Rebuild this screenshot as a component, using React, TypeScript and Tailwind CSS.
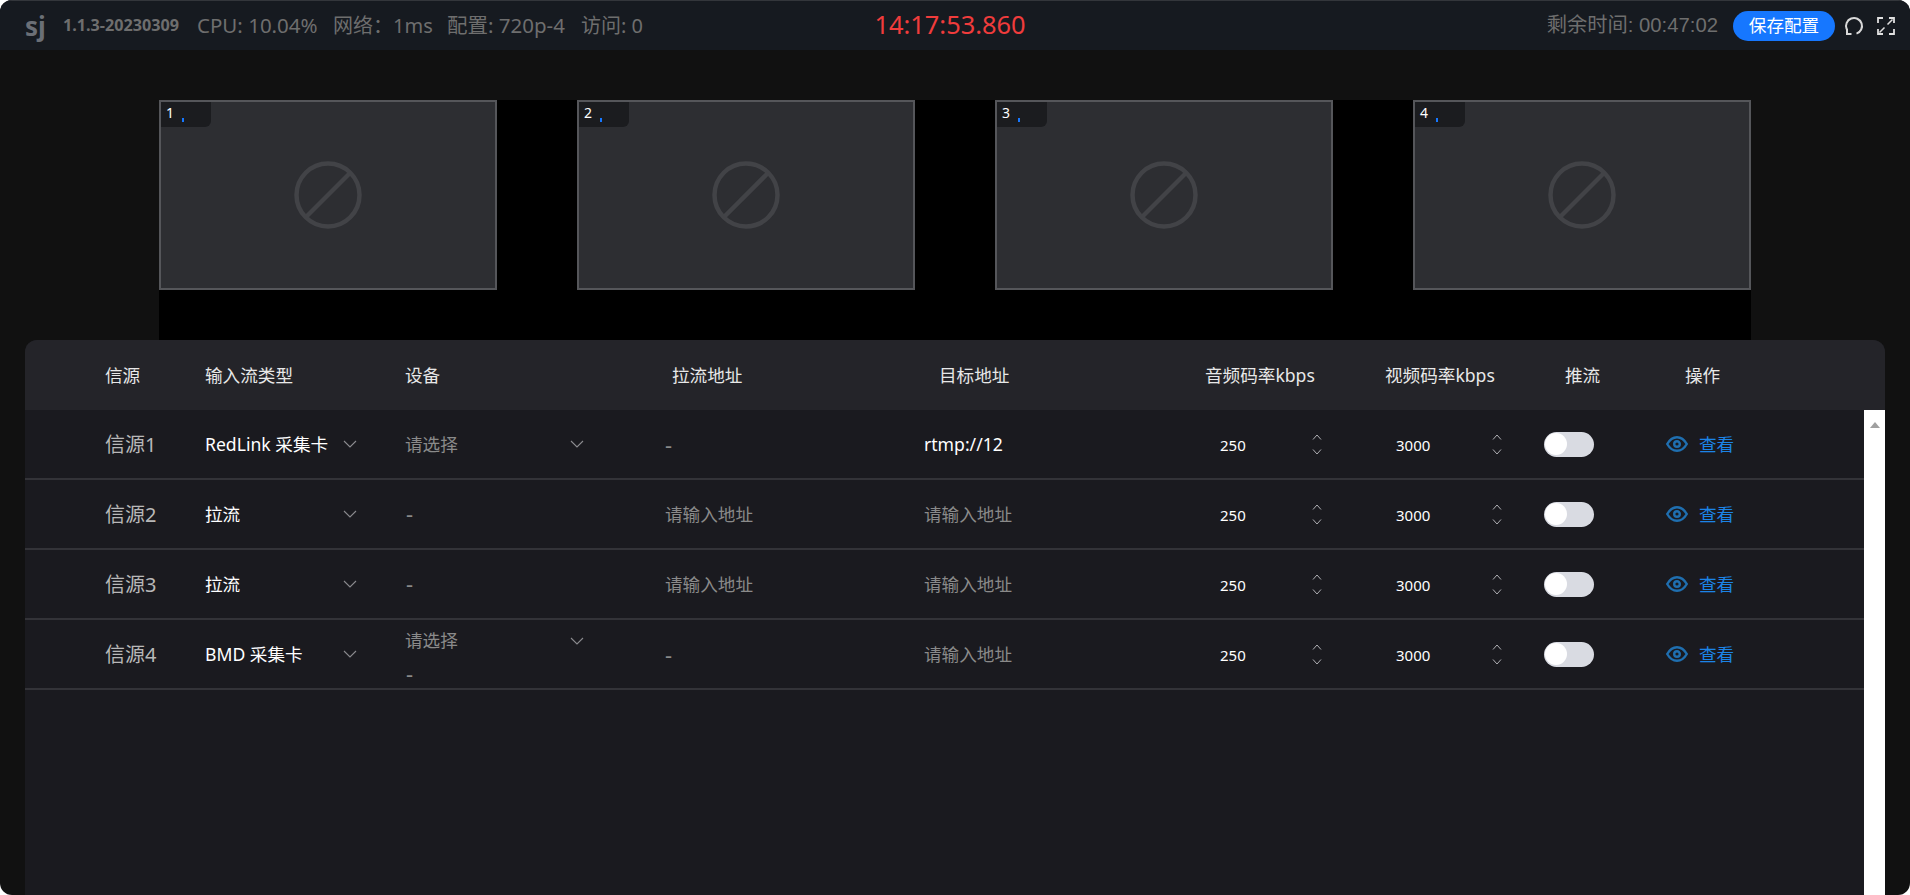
import React from "react";

const FONT = "font-['Noto_Sans','Noto_Sans_CJK_SC',sans-serif]";

interface SourceRow {
  name: string;
  type: string;
  device: "select" | "dash" | "both";
  pull: string | null;
  target: string | null;
}

const rows: SourceRow[] = [
  { name: "信源1", type: "RedLink 采集卡", device: "select", pull: null, target: "rtmp://12" },
  { name: "信源2", type: "拉流", device: "dash", pull: "", target: "" },
  { name: "信源3", type: "拉流", device: "dash", pull: "", target: "" },
  { name: "信源4", type: "BMD 采集卡", device: "both", pull: null, target: "" },
];

function Chevron({ up = false, className = "" }: { up?: boolean; className?: string }) {
  return (
    <svg width="14" height="8" viewBox="0 0 14 8" fill="none" className={className}>
      <path d={up ? "M1 7 L7 1 L13 7" : "M1 1 L7 7 L13 1"} stroke="#8a8a8e" strokeWidth="1.1" />
    </svg>
  );
}

function Spinner() {
  return (
    <div className="flex flex-col items-center gap-[9px]">
      <svg width="10" height="6" viewBox="0 0 10 6" fill="none">
        <path d="M1 5.5 L5 1 L9 5.5" stroke="#b0b0b4" strokeWidth="1" />
      </svg>
      <svg width="10" height="6" viewBox="0 0 10 6" fill="none">
        <path d="M1 .5 L5 5 L9 .5" stroke="#b0b0b4" strokeWidth="1" />
      </svg>
    </div>
  );
}

function VideoBox({ index }: { index: number }) {
  return (
    <div className="relative flex h-[190px] w-[338px] items-center justify-center border-2 border-[#55565a] bg-[#2d2e32]">
      <div className="absolute left-0 top-0 h-[25px] w-[50px] rounded-br-md bg-[#1b1c1f]">
        <span className="absolute left-[5px] top-[1px] text-[14px] leading-[20px] text-white">{index}</span>
        <span className="absolute left-[21px] top-[16px] h-[4px] w-[2px] bg-[#1677ff]" />
      </div>
      <svg width="68" height="68" viewBox="0 0 68 68" fill="none">
        <circle cx="34" cy="34" r="31.5" stroke="#424347" strokeWidth="4.5" />
        <path d="M56 12 L12 56" stroke="#424347" strokeWidth="4.5" />
      </svg>
    </div>
  );
}

function Row({ row }: { row: SourceRow }) {
  return (
    <div className="box-border grid h-[70px] grid-cols-[100px_200px_260px_259px_281px_180px_159px_122px_1fr] items-center border-b-2 border-[#333338] pl-[80px] text-[17.6px]">
      <div className="pt-[1px] text-[20px] text-[#b8b8b8]">{row.name}</div>
      <div className="flex w-[152px] items-center justify-between text-white">
        <span className="whitespace-nowrap">{row.type}</span>
        <Chevron />
      </div>
      <div className="relative h-full text-[#8a8a8a]">
        {row.device === "select" && (
          <div className="flex h-full w-[179px] items-center justify-between">
            <span>请选择</span>
            <Chevron />
          </div>
        )}
        {row.device === "dash" && <div className="flex h-full items-center pb-[1px] pl-[1px] text-[22px]">-</div>}
        {row.device === "both" && (
          <div className="flex h-full w-[179px] flex-col">
            <div className="flex h-[41px] items-center justify-between">
              <span>请选择</span>
              <Chevron />
            </div>
            <div className="pl-[1px] text-[22px] leading-[24px]">-</div>
          </div>
        )}
      </div>
      <div className="text-[#8a8a8a]">
        {row.pull === null ? <span className="text-[22px]">-</span> : "请输入地址"}
      </div>
      <div className={row.target ? "text-white" : "text-[#8a8a8a]"}>{row.target || "请输入地址"}</div>
      <div className="flex items-center">
        <span className="w-[107px] pl-[15px] pt-[2px] text-[15px] text-white">250</span>
        <Spinner />
      </div>
      <div className="flex items-center">
        <span className="w-[107px] pl-[11px] pt-[2px] text-[15px] text-white">3000</span>
        <Spinner />
      </div>
      <div className="flex h-[25px] w-[50px] items-center rounded-full bg-[#d9dbe2] pl-[1px]">
        <span className="h-[22px] w-[22px] rounded-full bg-white" />
      </div>
      <div className="flex items-center gap-[11px]">
        <svg width="22" height="16" viewBox="0 0 22 16" fill="none" stroke="#1f6fb0" strokeWidth="2.4">
          <path d="M1.2 8 C4 3.2 7.2 1.2 11 1.2 C14.8 1.2 18 3.2 20.8 8 C18 12.8 14.8 14.8 11 14.8 C7.2 14.8 4 12.8 1.2 8 Z" />
          <circle cx="11" cy="8" r="2.8" />
        </svg>
        <span className="text-[#1c84e6]">查看</span>
      </div>
    </div>
  );
}

export default function App() {
  return (
    <div className={`h-screen w-full overflow-hidden bg-white ${FONT}`}>
      <div className="flex h-full flex-col overflow-hidden rounded-[12px] bg-[#111111]">
        {/* Top bar */}
        <header className="flex h-[50px] shrink-0 items-center border-t border-[#33363b] bg-[#161a20] text-[20.5px] text-[#6e6e6e]">
          <div className="flex flex-1 items-center whitespace-nowrap pl-[25px]">
            <span className="w-[38px] text-[26px] font-bold leading-none text-[#6b6f76]">sj</span>
            <span className="w-[134px] text-[16.2px] font-bold">1.1.3-20230309</span>
            <span className="w-[136px]">CPU: 10.04%</span>
            <span className="w-[114px] text-[20px]">网络：1ms</span>
            <span className="w-[134px]">配置: 720p-4</span>
            <span className="text-[20px]">访问: 0</span>
          </div>
          <div className="mb-[1px] mr-[20px] text-[25.4px] leading-none text-[#f03c3c]">14:17:53.860</div>
          <div className="flex flex-1 items-center justify-end whitespace-nowrap pr-[15px]">
            <span className="font-['Liberation_Sans','Noto_Sans_CJK_SC',sans-serif] text-[20.3px]">剩余时间: 00:47:02</span>
            <button className="ml-[15px] h-[30px] w-[102px] rounded-full bg-[#1677ff] text-[17.6px] text-white">保存配置</button>
            <svg width="20" height="20" viewBox="0 0 20 20" fill="none" className="ml-[9px]">
              <path d="M2.6 13 A8 8 0 1 1 12.5 17.6" stroke="#d8d8d8" strokeWidth="2" />
              <path d="M3 12.5 V18 H7.5" stroke="#d8d8d8" strokeWidth="2" />
            </svg>
            <svg width="18" height="18" viewBox="0 0 18 18" fill="none" stroke="#e0e0e0" strokeWidth="1.8" className="ml-[13px]">
              <path d="M1 6 V1 H6 M12 1 H17 V6 M17 12 V17 H12 M6 17 H1 V12" />
              <path d="M10.5 7.5 L15.5 2.5 M7.5 10.5 L2.5 15.5" strokeWidth="1.5" />
            </svg>
          </div>
        </header>

        {/* Video previews */}
        <div className="mx-auto mt-[50px] flex h-[240px] w-[1592px] shrink-0 items-start gap-[80px] bg-black">
          {[1, 2, 3, 4].map((n) => (
            <VideoBox key={n} index={n} />
          ))}
        </div>

        {/* Source table */}
        <div className="mx-[25px] flex min-h-0 flex-1 flex-col overflow-hidden rounded-t-[12px] bg-[#1a1a1f]">
          <div className="grid h-[70px] shrink-0 grid-cols-[100px_200px_260px_259px_281px_180px_159px_122px_1fr] items-center whitespace-nowrap bg-[#242429] pl-[80px] text-[17.6px] text-[#e8e8e8]">
            <div>信源</div>
            <div>输入流类型</div>
            <div>设备</div>
            <div className="pl-[7px]">拉流地址</div>
            <div className="pl-[15px]">目标地址</div>
            <div>音频码率kbps</div>
            <div>视频码率kbps</div>
            <div className="pl-[21px]">推流</div>
            <div className="pl-[19px]">操作</div>
          </div>
          <div className="flex min-h-0 flex-1">
            <div className="min-w-0 flex-1">
              {rows.map((row) => (
                <Row key={row.name} row={row} />
              ))}
            </div>
            <div className="flex w-[21px] shrink-0 justify-center bg-white pt-[12px]">
              <svg width="10" height="6" viewBox="0 0 10 6">
                <path d="M0 6 L5 0 L10 6 Z" fill="#a0a0a0" />
              </svg>
            </div>
          </div>
        </div>
      </div>
    </div>
  );
}
